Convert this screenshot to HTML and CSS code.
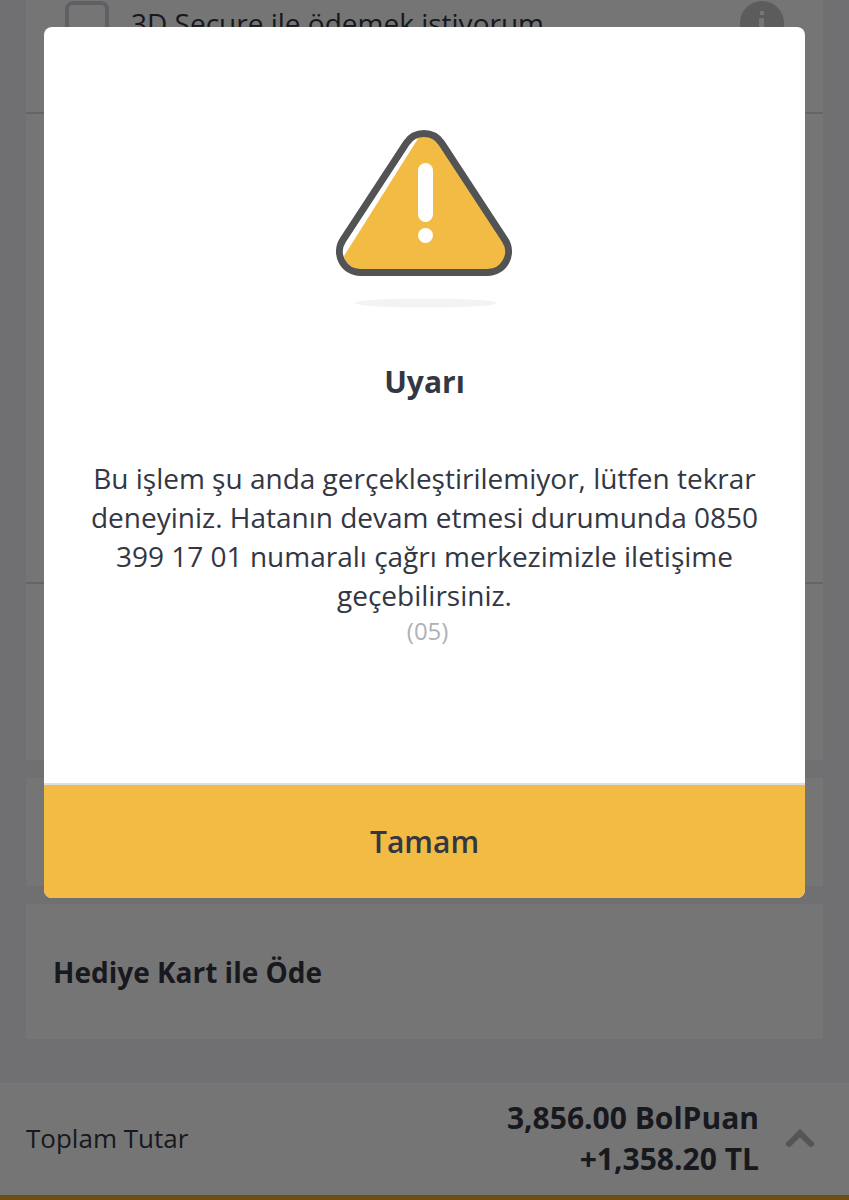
FILE: index.html
```html
<!DOCTYPE html>
<html lang="tr">
<head>
    <meta charset="UTF-8">
    <meta name="viewport" content="width=device-width, initial-scale=1.0">
    <title>Ödeme</title>
    <link rel="stylesheet" href="styles.css">
</head>
<body>
    <main class="content">
        <section class="card">
            <div class="secure-row">
                <input type="checkbox" id="secure">
                <label for="secure">3D Secure ile ödemek istiyorum</label>
                <button class="info" aria-label="Bilgi">
                    <svg width="44" height="44" viewBox="0 0 44 44">
                        <circle cx="22" cy="22" r="22" fill="#c8c8cb"/>
                        <path d="M20 10h4v4h-4zM19 17h5v17h-5z" fill="#fff"/>
                    </svg>
                </button>
            </div>
            <div class="card-details"></div>
            <div class="card-note"></div>
        </section>
        <section class="card option"></section>
        <section class="card gift">
            <h2>Hediye Kart ile Öde</h2>
        </section>
    </main>
    <footer class="total">
        <span class="total-label">Toplam Tutar</span>
        <div class="total-amount">
            <div>3,856.00 BolPuan</div>
            <div>+1,358.20 TL</div>
        </div>
        <button class="toggle" aria-label="Detay">
            <svg width="30" height="20" viewBox="0 0 30 20">
                <path d="M4 16L15 5L26 16" fill="none" stroke="#b9b9bc" stroke-width="6" stroke-linecap="round"/>
            </svg>
        </button>
    </footer>

    <!-- Warning popup -->
    <div class="overlay">
        <div class="modal" role="alertdialog" aria-labelledby="modalTitle" aria-describedby="modalText">
            <div class="modal-body">
                <svg class="warning-icon" width="210" height="200" viewBox="0 0 210 200">
                    <path d="M99 22L24 141A18 18 0 0 0 40 155H168A18 18 0 0 0 184 126L120 29A20 20 0 0 0 99 22Z" fill="#f1bb44"/>
                    <path d="M86.4 28A21 21 0 0 1 121.6 28L185.1 125A21 21 0 0 1 167.5 157.5H40.5A21 21 0 0 1 22.9 125Z" fill="none" stroke="#525354" stroke-width="7"/>
                    <rect x="98" y="48" width="15" height="59" rx="7.5" fill="#fff"/>
                    <circle cx="105.5" cy="120.5" r="7.5" fill="#fff"/>
                    <ellipse cx="106" cy="188" rx="71" ry="4.5" fill="#f3f3f3"/>
                </svg>
                <h1 id="modalTitle">Uyarı</h1>
                <p id="modalText">Bu işlem şu anda gerçekleştirilemiyor, lütfen tekrar deneyiniz. Hatanın devam etmesi durumunda 0850 399 17 01 numaralı çağrı merkezimizle iletişime geçebilirsiniz.</p>
                <div class="code">&nbsp;(05)</div>
            </div>
            <button class="confirm">Tamam</button>
        </div>
    </div>
</body>
</html>
```
FILE: styles.css
```css
* {
    box-sizing: border-box;
}
body {
    margin: 0;
    background: #f4f4fa;
    color: #333743;
    font-family: "Open Sans", sans-serif;
    font-size: 28px;
}
h1, h2, p {
    margin: 0;
}
button {
    padding: 0;
    border: 0;
    background: none;
    color: inherit;
    font-family: inherit;
}
svg {
    display: block;
}
.content {
    display: flex;
    flex-direction: column;
    gap: 18px;
    padding: 0 26px 44px;
}
.card {
    background: #fff;
}
.secure-row {
    display: flex;
    align-items: center;
    gap: 22px;
    height: 114px;
    padding: 0 39px 66px;
    border-bottom: 2px solid #dcdce0;
}
.secure-row input {
    appearance: none;
    width: 44px;
    height: 44px;
    margin: 0;
    border: 4px solid #d2d2db;
    border-radius: 8px;
}
.secure-row label {
    flex: 1;
}
.card-details {
    height: 470px;
    border-bottom: 2px solid #dcdce0;
}
.card-note {
    height: 176px;
}
.option {
    height: 108px;
}
.gift {
    padding: 49px 27px 48px;
}
.gift h2 {
    font-size: 28px;
    line-height: 38px;
}
.total {
    display: flex;
    align-items: center;
    height: 118px;
    padding: 0 34px 2px 26px;
    background: #fff;
    border-bottom: 6px solid #f1ab2c;
}
.total-label {
    flex: 1;
    font-size: 26px;
}
.total-amount {
    font-size: 30px;
    font-weight: bold;
    line-height: 41px;
    text-align: right;
}
.toggle {
    margin-left: 26px;
}
.overlay {
    position: fixed;
    inset: 0;
    padding: 27px 44px;
    background: rgba(0, 0, 0, 0.54);
}
.modal {
    overflow: hidden;
    border-radius: 8px;
    background: #fff;
    text-align: center;
}
.modal-body {
    padding: 88px 40px 136px;
    border-bottom: 2px solid #dedede;
}
.warning-icon {
    margin: 0 auto;
}
.modal-body h1 {
    margin-top: 47px;
    font-size: 30px;
    line-height: 40px;
}
.modal-body p {
    margin-top: 57px;
    line-height: 39px;
}
.code {
    color: #b0b1b5;
    font-size: 24px;
    line-height: 32px;
}
.confirm {
    display: block;
    width: 100%;
    height: 113px;
    background: #f1bb44;
    font-size: 30px;
    font-weight: 600;
}
```
